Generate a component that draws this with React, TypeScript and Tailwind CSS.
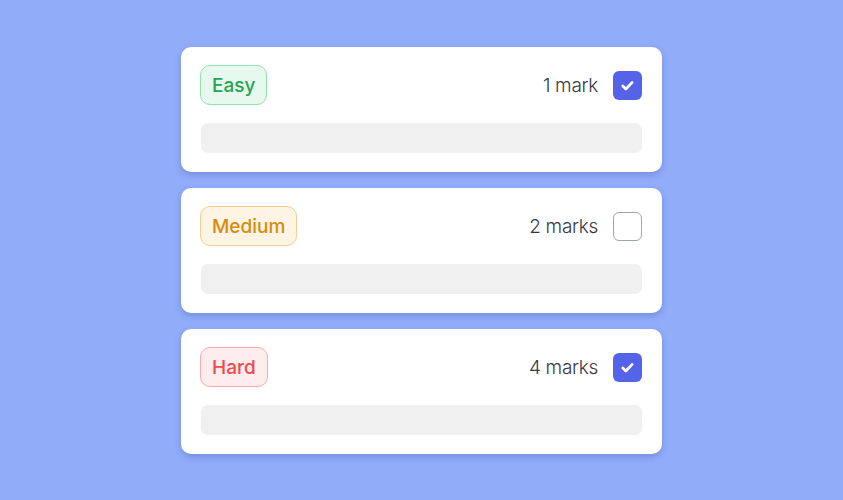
import React from 'react';

type Level = {
  label: string;
  marks: string;
  checked: boolean;
  badge: string;
};

const levels: Level[] = [
  { label: 'Easy', marks: '1 mark', checked: true, badge: 'bg-[#e7f9ee] border-[#8fe3ab] text-[#26a552]' },
  { label: 'Medium', marks: '2 marks', checked: false, badge: 'bg-[#fdf4e4] border-[#f4cf8f] text-[#d88b0b]' },
  { label: 'Hard', marks: '4 marks', checked: true, badge: 'bg-[#ffeced] border-[#fbaaab] text-[#ef4a4f]' },
];

const Check = ({ checked }: { checked: boolean }) =>
  checked ? (
    <div className="w-[29px] h-[29px] rounded-[6px] bg-[#5563e9] flex items-center justify-center">
      <svg width="17" height="17" viewBox="0 0 16 16" fill="none">
        <path d="M3.6 8.4l2.9 2.9 5.9-6.2" stroke="white" strokeWidth="2.6" strokeLinecap="round" strokeLinejoin="round" />
      </svg>
    </div>
  ) : (
    <div className="w-[29px] h-[29px] rounded-[6px] border-[1.5px] border-[#a0a5b2] bg-white" />
  );

export default function App() {
  return (
    <div className="w-full h-[500px] bg-[#91acf9] flex flex-col items-center justify-center gap-4 font-['Inter',sans-serif]">
      {levels.map(l => (
        <div
          key={l.label}
          className="w-[481px] h-[125px] bg-white rounded-[10px] shadow-[0_3px_6px_rgba(40,60,140,0.25)] pl-[19px] pr-[20px] pt-[18px] flex flex-col gap-[18px]"
        >
          <div className="flex items-center justify-between">
            <span className={`h-[40px] px-[11px] pt-[3px] flex items-center rounded-[10px] border text-[19px] font-medium ${l.badge}`}>
              {l.label}
            </span>
            <div className="flex items-center gap-[15px] pt-[1px]">
              <span className="text-[19px] font-light text-[#36383f] tracking-[-0.3px] pt-[3px]">{l.marks}</span>
              <Check checked={l.checked} />
            </div>
          </div>
          <div className="h-[30px] ml-[1px] rounded-[7px] bg-[#f1f0f1]" />
        </div>
      ))}
    </div>
  );
}
